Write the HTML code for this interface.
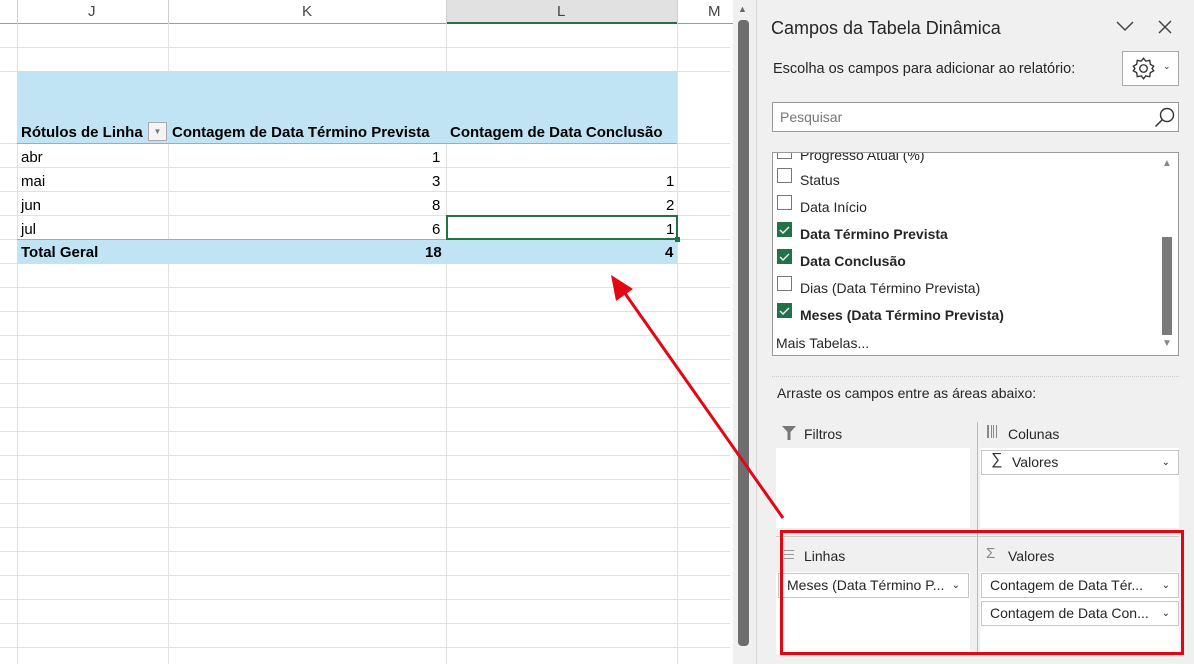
<!DOCTYPE html>
<html><head><meta charset="utf-8"><style>
*{margin:0;padding:0;box-sizing:border-box}
body{width:1194px;height:664px;overflow:hidden;background:#fff;font-family:"Liberation Sans",sans-serif;position:relative}
.a{position:absolute}
.hl{position:absolute;height:1px;background:#e1e1e1}
.vl{position:absolute;width:1px;background:#e1e1e1}
.c{position:absolute;font-size:15px;color:#000;font-family:"Liberation Sans Narrow","Liberation Sans",sans-serif;line-height:24px}
.p{position:absolute;font-size:14px;color:#262626;line-height:18px;white-space:nowrap}
.cb{position:absolute;width:15px;height:15px;border:1px solid #777;background:#fff}
.ck{position:absolute;width:15px;height:15px;background:#217346}
.dd{position:absolute;background:#fff;border:1px solid #c6c6c6;height:25px;font-size:14px;color:#262626;line-height:23px;padding-left:8px;white-space:nowrap}
.dd i{position:absolute;right:8px;top:0;font-style:normal;font-size:10px}
</style></head><body>
<div class="a" style="left:0;top:0;width:735px;height:24px;background:#fff;border-bottom:1px solid #9b9b9b"></div>
<div class="a" style="left:446px;top:0;width:231px;height:24px;background:#e1e1e1;border-bottom:2px solid #217346"></div>
<div class="c" style="left:88px;top:0;color:#444">J</div>
<div class="c" style="left:302px;top:0;color:#444">K</div>
<div class="c" style="left:557px;top:0;color:#444">L</div>
<div class="c" style="left:708px;top:0;color:#444">M</div>
<div class="vl" style="left:17px;top:0;height:24px;background:#d0d0d0"></div>
<div class="vl" style="left:168px;top:0;height:24px;background:#d0d0d0"></div>
<div class="vl" style="left:446px;top:0;height:24px;background:#d0d0d0"></div>
<div class="vl" style="left:677px;top:0;height:24px;background:#d0d0d0"></div>
<div class="vl" style="left:17px;top:24px;height:640px"></div>
<div class="vl" style="left:168px;top:24px;height:640px"></div>
<div class="vl" style="left:446px;top:24px;height:640px"></div>
<div class="vl" style="left:677px;top:24px;height:640px"></div>
<div class="hl" style="left:0;top:47px;width:730px"></div>
<div class="hl" style="left:0;top:71px;width:730px"></div>
<div class="hl" style="left:0;top:143px;width:730px"></div>
<div class="hl" style="left:0;top:167px;width:730px"></div>
<div class="hl" style="left:0;top:191px;width:730px"></div>
<div class="hl" style="left:0;top:215px;width:730px"></div>
<div class="hl" style="left:0;top:239px;width:730px"></div>
<div class="hl" style="left:0;top:263px;width:730px"></div>
<div class="hl" style="left:0;top:287px;width:730px"></div>
<div class="hl" style="left:0;top:311px;width:730px"></div>
<div class="hl" style="left:0;top:335px;width:730px"></div>
<div class="hl" style="left:0;top:359px;width:730px"></div>
<div class="hl" style="left:0;top:383px;width:730px"></div>
<div class="hl" style="left:0;top:407px;width:730px"></div>
<div class="hl" style="left:0;top:431px;width:730px"></div>
<div class="hl" style="left:0;top:455px;width:730px"></div>
<div class="hl" style="left:0;top:479px;width:730px"></div>
<div class="hl" style="left:0;top:503px;width:730px"></div>
<div class="hl" style="left:0;top:527px;width:730px"></div>
<div class="hl" style="left:0;top:551px;width:730px"></div>
<div class="hl" style="left:0;top:575px;width:730px"></div>
<div class="hl" style="left:0;top:599px;width:730px"></div>
<div class="hl" style="left:0;top:623px;width:730px"></div>
<div class="hl" style="left:0;top:647px;width:730px"></div>
<div class="a" style="left:17px;top:71px;width:660px;height:73px;background:#c0e4f4;border-bottom:1px solid #7ab8d8"></div>
<div class="c" style="left:21px;top:121px;font-weight:bold">Rótulos de Linha</div>
<div class="a" style="left:148px;top:122px;width:19px;height:19px;border:1px solid #aaa;background:#f4f4f4;font-size:8px;color:#777;text-align:center;line-height:17px">▼</div>
<div class="c" style="left:172px;top:121px;font-weight:bold">Contagem de Data Término Prevista</div>
<div class="c" style="left:450px;top:121px;font-weight:bold">Contagem de Data Conclusão</div>
<div class="c" style="left:21px;top:146px">abr</div><div class="c" style="left:432px;top:146px">1</div>
<div class="c" style="left:21px;top:170px">mai</div><div class="c" style="left:432px;top:170px">3</div><div class="c" style="left:666px;top:170px">1</div>
<div class="c" style="left:21px;top:194px">jun</div><div class="c" style="left:432px;top:194px">8</div><div class="c" style="left:666px;top:194px">2</div>
<div class="c" style="left:21px;top:218px">jul</div><div class="c" style="left:432px;top:218px">6</div><div class="c" style="left:666px;top:218px">1</div>
<div class="a" style="left:17px;top:239px;width:660px;height:25px;background:#c0e4f4;border-top:1px solid #7ab8d8"></div>
<div class="c" style="left:21px;top:241px;font-weight:bold">Total Geral</div>
<div class="c" style="left:425px;top:241px;font-weight:bold">18</div>
<div class="c" style="left:665px;top:241px;font-weight:bold">4</div>
<div class="a" style="left:446px;top:215px;width:232px;height:25px;border:2px solid #217346"></div>
<div class="a" style="left:675px;top:237px;width:5px;height:5px;background:#217346"></div>
<div class="a" style="left:733px;top:0;width:23px;height:664px;background:#f0f0f0"></div>
<div class="a" style="left:738px;top:4px;font-size:9px;color:#666">▲</div>
<div class="a" style="left:738px;top:20px;width:11px;height:626px;background:#6e6e6e;border-radius:4px"></div>
<div class="a" style="left:756px;top:0;width:1px;height:664px;background:#d6d6d6"></div>
<div class="a" style="left:757px;top:0;width:437px;height:664px;background:#f0f0f0"></div>
<div class="p" style="left:771px;top:18px;font-size:18px;color:#262626;line-height:20px">Campos da Tabela Dinâmica</div>
<svg class="a" style="left:1115px;top:19px" width="20" height="14"><path d="M2 3 L10 11 L18 3" fill="none" stroke="#444" stroke-width="1.5"/></svg>
<svg class="a" style="left:1157px;top:19px" width="16" height="16"><path d="M2 2 L14 14 M14 2 L2 14" fill="none" stroke="#444" stroke-width="1.5"/></svg>
<div class="p" style="left:773px;top:60px;font-size:14.5px">Escolha os campos para adicionar ao relatório:</div>
<div class="a" style="left:1122px;top:51px;width:57px;height:35px;border:1px solid #aaa;background:#fff"></div>
<svg class="a" style="left:1131px;top:56px" width="25" height="25" viewBox="0 0 22 22"><path d="M11 2 L13 4.5 L16.5 3.8 L17 7.3 L20 9 L18.5 11 L20 13 L17 14.7 L16.5 18.2 L13 17.5 L11 20 L9 17.5 L5.5 18.2 L5 14.7 L2 13 L3.5 11 L2 9 L5 7.3 L5.5 3.8 L9 4.5 Z" fill="none" stroke="#333" stroke-width="1.2"/><circle cx="11" cy="11" r="3.3" fill="none" stroke="#333" stroke-width="1.2"/></svg>
<div class="a" style="left:1163px;top:61px;font-size:9px;color:#333">⌄</div>
<div class="a" style="left:772px;top:102px;width:407px;height:30px;border:1px solid #999;background:#fff"></div>
<div class="p" style="left:780px;top:108px;color:#777">Pesquisar</div>
<svg class="a" style="left:1153px;top:106px" width="24" height="22"><circle cx="14" cy="9" r="6.5" fill="none" stroke="#333" stroke-width="1.4"/><path d="M9.5 13.5 L2.5 20.5" stroke="#333" stroke-width="1.5"/></svg>
<div class="a" style="left:772px;top:152px;width:407px;height:204px;border:1px solid #999;background:#fff;overflow:hidden">
 <div class="p" style="left:27px;top:-7px">Progresso Atual (%)</div>
 <div class="cb" style="left:4px;top:-9px"></div>
</div>
<div class="cb" style="left:777px;top:168px"></div><div class="p" style="left:800px;top:171px">Status</div>
<div class="cb" style="left:777px;top:195px"></div><div class="p" style="left:800px;top:198px">Data Início</div>
<div class="ck" style="left:777px;top:222px"></div><div class="p" style="left:800px;top:225px;font-weight:bold">Data Término Prevista</div>
<div class="ck" style="left:777px;top:249px"></div><div class="p" style="left:800px;top:252px;font-weight:bold">Data Conclusão</div>
<div class="cb" style="left:777px;top:276px"></div><div class="p" style="left:800px;top:279px">Dias (Data Término Prevista)</div>
<div class="ck" style="left:777px;top:303px"></div><div class="p" style="left:800px;top:306px;font-weight:bold">Meses (Data Término Prevista)</div>
<div class="p" style="left:776px;top:334px">Mais Tabelas...</div>
<svg class="a" style="left:777px;top:224px" width="100" height="100"><path d="M3 6 L6 9 L12 3" fill="none" stroke="#fff" stroke-width="1.4"/><path d="M3 33 L6 36 L12 30" fill="none" stroke="#fff" stroke-width="1.4"/><path d="M3 87 L6 90 L12 84" fill="none" stroke="#fff" stroke-width="1.4"/></svg>
<div class="a" style="left:1162px;top:158px;font-size:10px;color:#888">▲</div>
<div class="a" style="left:1162px;top:237px;width:10px;height:98px;background:#7a7a7a"></div>
<div class="a" style="left:1162px;top:338px;font-size:10px;color:#888">▼</div>
<div class="a" style="left:772px;top:376px;width:407px;border-top:1px dotted #ccc"></div>
<div class="p" style="left:777px;top:384px">Arraste os campos entre as áreas abaixo:</div>
<svg class="a" style="left:781px;top:425px" width="16" height="16"><path d="M1 1 H15 L9.5 7 V15 H6.5 V7 Z" fill="#777"/></svg>
<div class="p" style="left:804px;top:425px">Filtros</div>
<div class="a" style="left:987px;top:425px;width:10px;height:13px;border-left:2px solid #888;border-right:1px solid #888"></div><div class="a" style="left:991px;top:425px;width:3px;height:13px;border-left:1px solid #888;border-right:1px solid #888"></div>
<div class="p" style="left:1008px;top:425px">Colunas</div>
<div class="a" style="left:776px;top:448px;width:194px;height:80px;background:#fff"></div>
<div class="a" style="left:980px;top:448px;width:199px;height:80px;background:#fff"></div>
<div class="dd" style="left:981px;top:450px;width:198px;padding-left:30px">Valores<i>⌄</i></div>
<div class="a" style="left:991px;top:451px;font-size:16px;color:#333">∑</div>
<div class="a" style="left:977px;top:422px;width:1px;height:232px;background:#bbb"></div>
<div class="a" style="left:776px;top:536px;width:403px;height:1px;background:#ccc"></div>
<div class="a" style="left:784px;top:550px;width:10px;height:9px;border-top:1px solid #999;border-bottom:1px solid #999"></div><div class="a" style="left:784px;top:554px;width:10px;height:1px;background:#999"></div>
<div class="p" style="left:804px;top:547px">Linhas</div>
<div class="a" style="left:986px;top:545px;font-size:15px;color:#888">Σ</div>
<div class="p" style="left:1008px;top:547px">Valores</div>
<div class="a" style="left:776px;top:572px;width:194px;height:82px;background:#fff"></div>
<div class="a" style="left:980px;top:572px;width:199px;height:82px;background:#fff"></div>
<div class="dd" style="left:778px;top:573px;width:191px;padding-left:8px">Meses (Data Término P...<i>⌄</i></div>
<div class="dd" style="left:981px;top:573px;width:198px">Contagem de Data Tér...<i>⌄</i></div>
<div class="dd" style="left:981px;top:601px;width:198px">Contagem de Data Con...<i>⌄</i></div>
<div class="a" style="left:780px;top:530px;width:404px;height:125px;border:3px solid #e30613"></div>
<svg class="a" style="left:0;top:0" width="1194" height="664"><line x1="783" y1="518" x2="624" y2="292" stroke="#e30613" stroke-width="3"/><path d="M611 275 L633 289 L616 301 Z" fill="#e30613"/></svg>
</body></html>
